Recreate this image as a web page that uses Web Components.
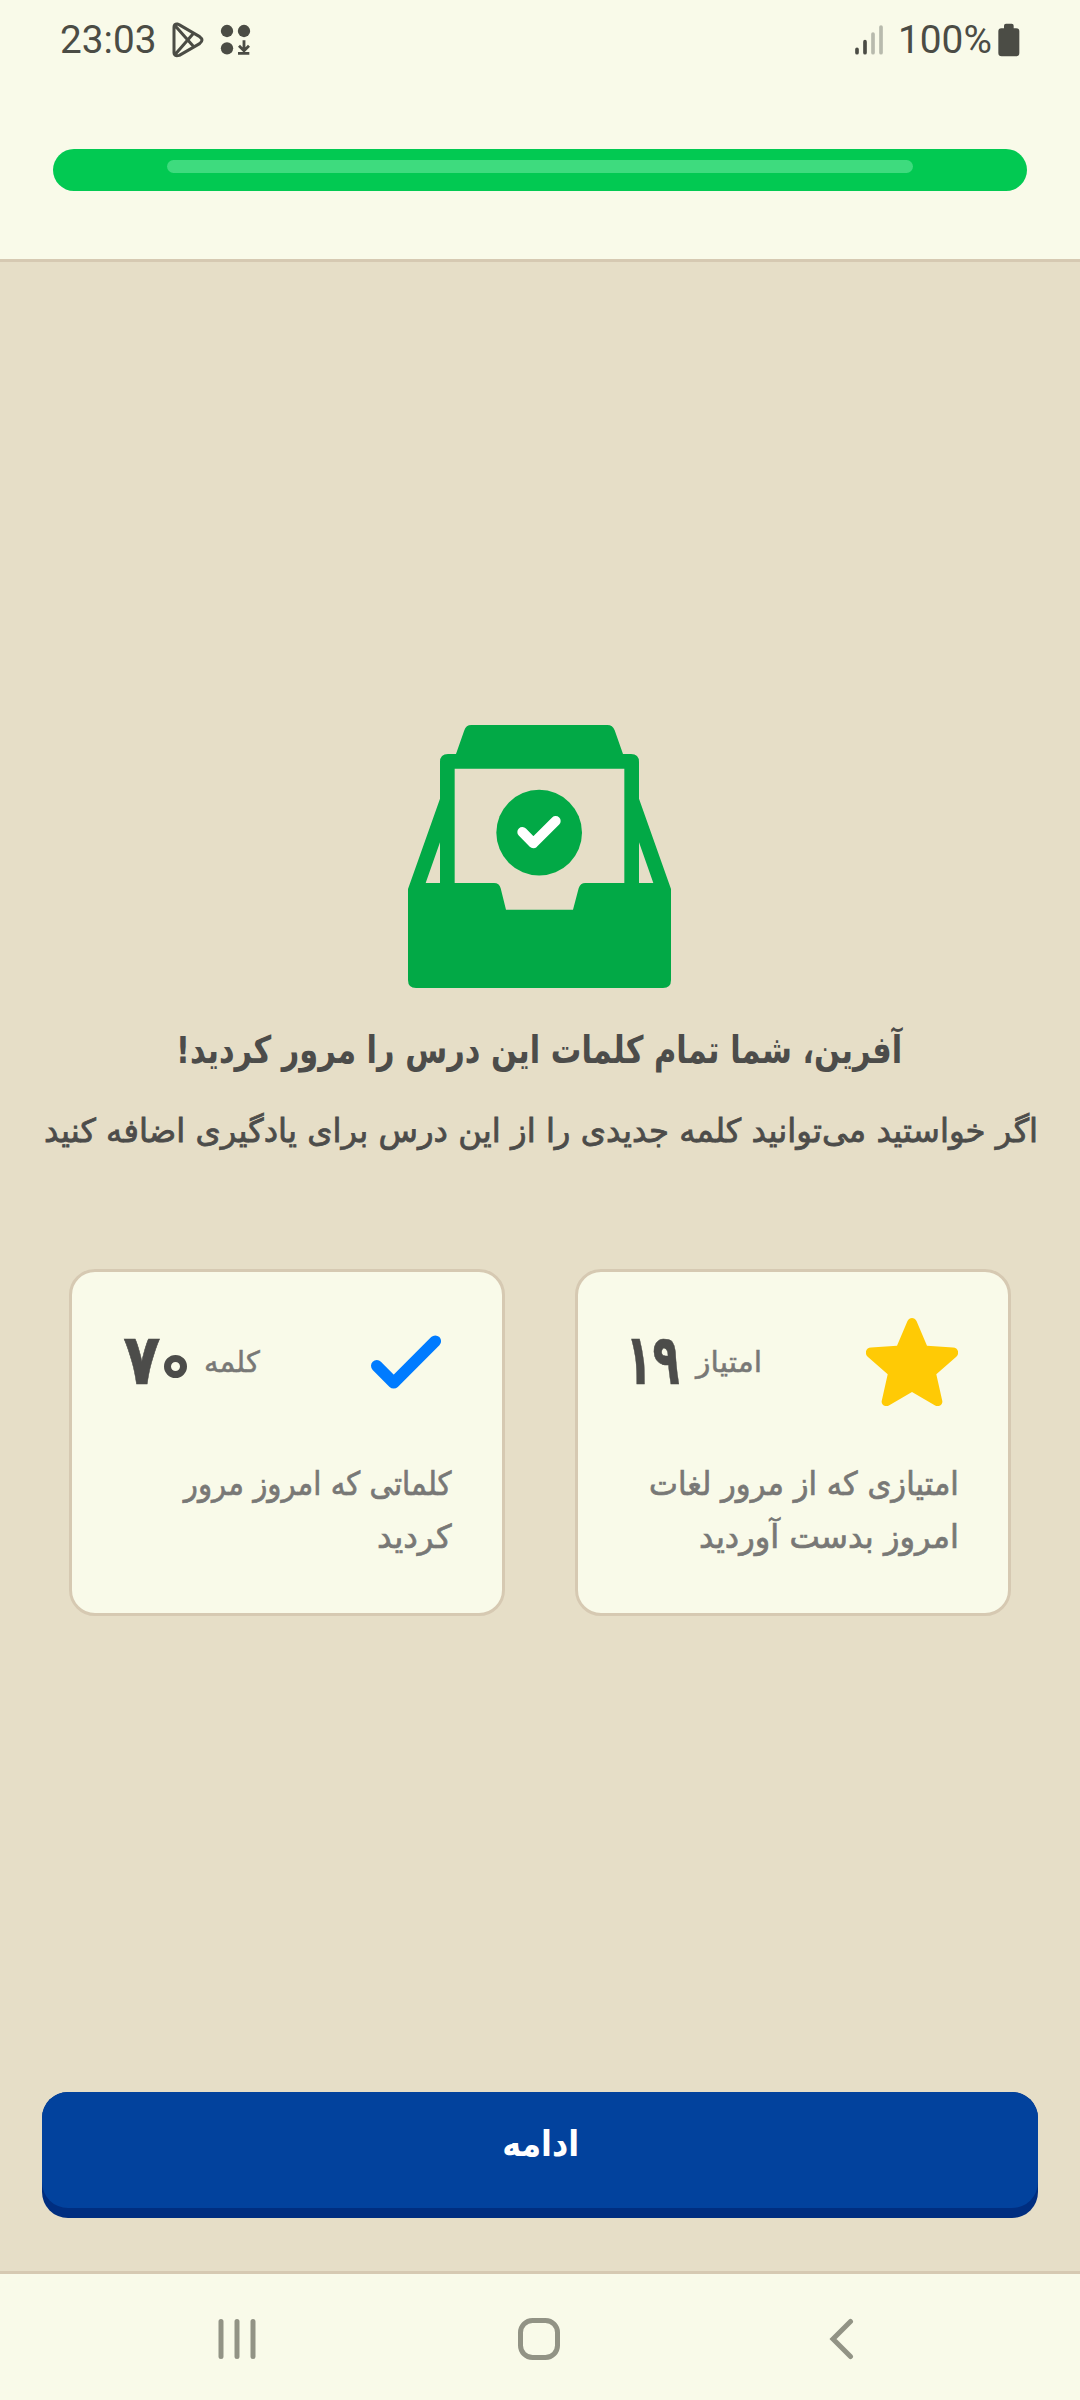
<!DOCTYPE html>
<html lang="fa">
<head>
<meta charset="utf-8">
<title>مرور درس</title>
<style>
html,body{margin:0;padding:0}
body{width:1080px;height:2400px;background:#e6dec7;font-family:"DejaVu Sans","Noto Sans",sans-serif;color:#4c4c4a;overflow:hidden}
</style>
</head>
<body>
<lesson-screen></lesson-screen>
<script>
const define = (name, html, setup) => {
  const tpl = document.createElement('template');
  tpl.innerHTML = html;
  customElements.define(name, class extends HTMLElement {
    connectedCallback() {
      if (this.shadowRoot) return;
      this.attachShadow({mode: 'open'}).append(tpl.content.cloneNode(true));
      if (setup) setup(this, this.shadowRoot);
    }
  });
};

/* One line of text whose ink spans exactly `w` pixels. */
const pen = document.createElement('canvas').getContext('2d');
define('fit-line', `<style>
  :host{display:block;flex:none;overflow:visible}
  span{display:block;width:max-content;white-space:pre;transform-origin:0 50%;-webkit-text-stroke:var(--stroke,0) currentColor}
</style><span></span>`, (el, root) => {
  const get = (n, d) => el.getAttribute(n) || d;
  const text = get('text', ''), size = +get('size', 32), w = +get('w', 100), lh = +get('lh', 50);
  const weight = get('weight', '400'), family = get('family', '"DejaVu Sans"');
  const span = root.querySelector('span');
  span.textContent = text;
  span.dir = get('dir', 'rtl');
  pen.font = `${weight} ${size}px ${family}`;
  pen.direction = span.dir;
  pen.textAlign = 'left';
  const m = pen.measureText(text);
  const k = w / (m.actualBoundingBoxLeft + m.actualBoundingBoxRight);
  el.style.cssText += `;width:${w}px;height:${lh}px`;
  span.style.cssText = `font:${weight} ${size}px/${lh}px ${family};transform:translateX(${m.actualBoundingBoxLeft * k}px) scaleX(${k})`;
  if (get('stroke')) el.style.setProperty('--stroke', get('stroke') + 'px');
});

/* Persian zero drawn as an open ring around its (transparent) digit. */
define('ring-zero', `<style>
  :host{display:block;flex:none;box-sizing:border-box;width:23px;height:23px;border:7px solid #4c4c4a;border-radius:50%;font:9px/9px "DejaVu Sans";text-align:center;overflow:hidden}
  span{color:transparent}
</style><span>۰</span>`);

define('status-bar', `<style>
  :host{display:flex;height:80px;box-sizing:border-box;padding:0 60px 0 61px;align-items:center;color:#4b4c45}
  svg{display:block;flex:none}
  .gap{flex:1}
  .play{margin-left:18px}.apps{margin-left:16px}.sig{margin-right:18px}.bat{margin-left:7px}
</style>
<fit-line dir="ltr" family="Roboto" size="38" lh="80" w="93" text="23:03"></fit-line>
<svg class="play" width="32" height="36" viewBox="517 67 96 108" fill="none" stroke="#4b4c45" stroke-width="9" stroke-linejoin="round"><path d="M523 82Q523 72 533 73L538 75L600 111Q614 121 600 132L539 167Q523 171 523 160ZM525 77L583 142M525 166L583 99"/></svg>
<svg class="apps" width="32" height="32" viewBox="660 74 96 96" fill="#4b4c45"><circle cx="681" cy="95" r="18.500"/><circle cx="732" cy="95" r="18.500"/><circle cx="681" cy="147" r="18.500"/><path d="M732 123V152M717 139L732 154L747 139M714 162H748" fill="none" stroke="#4b4c45" stroke-width="8.500"/></svg>
<div class="gap"></div>
<svg class="sig" width="28" height="30" viewBox="108 74 84 90" fill="none" stroke="#4b4c45" stroke-width="11" stroke-linecap="round"><path d="M114 147V157M138 124V157"/><path d="M162 101V157M186 80V157" stroke="#b8baad"/></svg>
<fit-line dir="ltr" family="Roboto" size="38" lh="80" w="90" text="100%"></fit-line>
<svg class="bat" width="22" height="34" viewBox="536 67 66 102" fill="#4b4c45"><path d="M554 83V75Q554 69 560 69H577Q583 69 583 75V83H591Q600 83 600 92V157Q600 167 590 167H547Q537 167 537 157V92Q537 83 546 83Z"/></svg>`);

define('lesson-progress', `<style>
  :host{display:block;margin:69px 53px 0;height:42px;border-radius:21px;background:#02c952;padding:11px 114px 0;box-sizing:border-box}
  i{display:block;height:13px;border-radius:7px;background:#3edb7e}
</style><i></i>`);

define('tray-icon', `<style>:host{display:block;width:263px;height:263px;margin-right:1px}svg{display:block}</style>
<svg width="263" height="263" viewBox="54 75 789 789" fill="#02a946">
<path fill-rule="evenodd" d="M54 567L150 296V186Q150 162 174 162H198L223 91Q228 75 244 75H652Q668 75 674 91L699 162H723Q747 162 747 186V296L843 567V840Q843 864 819 864H78Q54 864 54 840ZM194 206V549H312Q328 549 332 565L348 629H549L566 565Q571 549 586 549H703V206ZM107 549H150V427ZM747 427V549H790Z"/>
<circle cx="447.500" cy="398" r="128.500"/>
<path d="M397 396L430 430L497 363" fill="none" stroke="#fff" stroke-width="30" stroke-linecap="round" stroke-linejoin="round"/></svg>`);

define('star-icon', `<style>:host,svg{display:block}</style>
<svg width="92" height="88" viewBox="0 0 92 88"><path fill="#ffca05" d="M41.500 3C43.500-1 48.500-1 50.500 3L61 27.700L87 29.500C92 29.500 94 35.500 90.300 38.700L70.300 56.300L76.300 83C77 87 72.500 89.500 68.700 87.300L46 74L23.300 87.300C19.500 89.500 15 87 15.700 83L21.700 56.300L1.700 38.700C-2 35.500 0 29.500 5 29.500L31 27.700Z"/></svg>`);

define('check-icon', `<style>:host,svg{display:block}</style>
<svg width="92" height="88" viewBox="360 1318 92 88"><path d="M376.800 1365.800L393.700 1382.800L435.300 1341.200" fill="none" stroke="#007bff" stroke-width="11.600" stroke-linecap="round" stroke-linejoin="round"/></svg>`);

define('stat-card', `<style>
  :host{display:flex;flex-direction:column;box-sizing:border-box;width:436px;height:347px;border:3px solid #d6c9b2;border-radius:26px;background:#f9fae9;padding:46px 50px 0 52px}
  .row{display:flex;align-items:center;height:88px;color:#4c4c4a}
  .value{display:flex;align-items:center;margin-top:-4px}
  .gap{flex:1}
  .label,.desc{color:#787876}
  .desc{display:flex;flex-direction:column;align-items:flex-end;margin-top:52px}
</style>
<div class="row"><div class="value"><slot name="value"></slot></div><div class="label"><slot name="label"></slot></div><div class="gap"></div><slot name="icon"></slot></div>
<div class="desc"><slot></slot></div>`);

define('primary-button', `<style>
  :host{display:block;height:126px;border-radius:26px;background:#002e80}
  button{display:flex;width:100%;height:116px;border:0;padding:0 0 12px;border-radius:26px;background:#02429d;color:#fff;justify-content:center;align-items:center;box-sizing:border-box}
</style><button><slot></slot></button>`);

define('system-nav', `<style>
  :host{display:flex;height:123px;width:637px;align-items:center;padding:3px 226px 0 217px;justify-content:space-between;border-top:3px solid #d6c9b2;background:#f9fae9}
  svg{display:block}
  .home{margin-right:8px}
</style>
<svg width="40" height="42" viewBox="0 0 40 42" fill="none" stroke="#929385" stroke-width="5" stroke-linecap="round"><path d="M4 3.500V38.500M20 3.500V38.500M36 3.500V38.500"/></svg>
<svg class="home" width="42" height="42" viewBox="0 0 42 42" fill="none" stroke="#929385" stroke-width="5"><rect x="2.500" y="2.500" width="37" height="37" rx="12"/></svg>
<svg width="25" height="42" viewBox="0 0 25 42" fill="none" stroke="#929385" stroke-width="5" stroke-linecap="round"><path d="M21.500 3.500L4 21L21.500 38.500"/></svg>`);

define('lesson-screen', `<style>
  :host{display:flex;flex-direction:column;width:1080px;height:2400px;background:#e6dec7}
  header{height:259px;background:#f9fae9;border-bottom:3px solid #d6c9b2}
  main{display:flex;flex-direction:column;align-items:center;padding-top:463px;flex:1}
  .title{margin:32px 0 0 2px}
  .sub{margin:26px 0 0}
  .cards{display:flex;gap:70px;margin-top:113px}
  primary-button{width:996px;margin-top:auto;margin-bottom:53px}
</style>
<header><status-bar></status-bar><lesson-progress></lesson-progress></header>
<main>
  <tray-icon></tray-icon>
  <fit-line class="title" size="38" weight="700" lh="60" w="723" text="آفرین، شما تمام کلمات این درس را مرور کردید!"></fit-line>
  <fit-line class="sub" size="32.500" lh="50" w="990" stroke="0.8" text="اگر خواستید می‌توانید کلمه جدیدی را از این درس برای یادگیری اضافه کنید"></fit-line>
  <div class="cards">
    <stat-card>
      <fit-line slot="value" size="71" weight="700" lh="80" w="36" stroke="0.6" text="۷"></fit-line>
      <ring-zero slot="value" style="margin:12px 0 0 4px"></ring-zero>
      <fit-line slot="label" style="margin-left:19px" size="29" lh="50" w="54" stroke="0.5" text="کلمه"></fit-line>
      <check-icon slot="icon"></check-icon>
      <fit-line size="32.500" lh="53" w="270" stroke="0.7" text="کلماتی که امروز مرور"></fit-line>
      <fit-line size="32.500" lh="53" w="74" stroke="0.7" text="کردید"></fit-line>
    </stat-card>
    <stat-card>
      <fit-line slot="value" size="71" weight="700" lh="80" w="48" stroke="0.6" style="margin-left:1px" text="۱۹"></fit-line>
      <fit-line slot="label" style="margin-left:15px" size="29" lh="50" w="66" stroke="0.5" text="امتیاز"></fit-line>
      <star-icon slot="icon"></star-icon>
      <fit-line size="32.500" lh="53" w="305" stroke="0.7" style="margin-right:2px" text="امتیازی که از مرور لغات"></fit-line>
      <fit-line size="32.500" lh="53" w="256" stroke="0.7" style="margin-right:2px" text="امروز بدست آوردید"></fit-line>
    </stat-card>
  </div>
  <primary-button><fit-line size="36" weight="700" lh="60" w="73" text="ادامه"></fit-line></primary-button>
</main>
<system-nav></system-nav>`);
</script>
</body>
</html>
